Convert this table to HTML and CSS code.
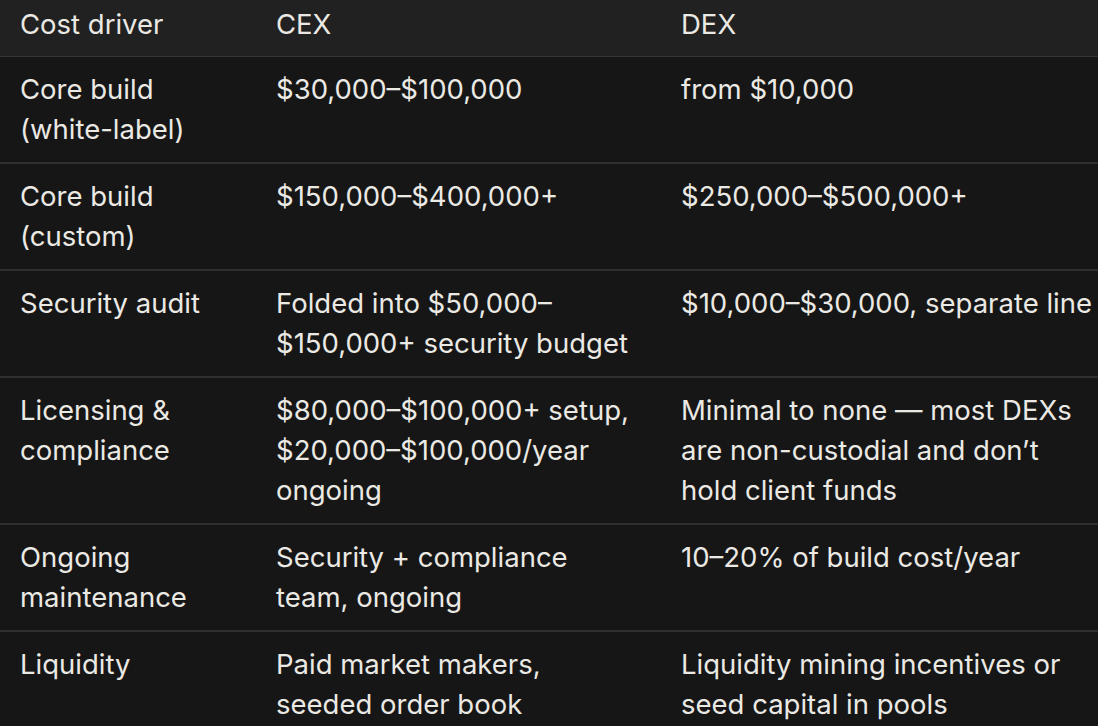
FILE: index.html
```html
<!DOCTYPE html>
<html>
<head>
<meta charset="utf-8">
<link rel="stylesheet" href="styles.css">
</head>
<body>
<div class="table">
  <div class="row head">
    <div class="cell">Cost driver</div>
    <div class="cell">CEX</div>
    <div class="cell">DEX</div>
  </div>
  <div class="row">
    <div class="cell">Core build (white-label)</div>
    <div class="cell">$30,000–$100,000</div>
    <div class="cell">from $10,000</div>
  </div>
  <div class="row">
    <div class="cell">Core build (custom)</div>
    <div class="cell">$150,000–$400,000+</div>
    <div class="cell">$250,000–$500,000+</div>
  </div>
  <div class="row">
    <div class="cell">Security audit</div>
    <div class="cell">Folded into $50,000–$150,000+ security budget</div>
    <div class="cell">$10,000–$30,000, separate line</div>
  </div>
  <div class="row">
    <div class="cell">Licensing &amp; compliance</div>
    <div class="cell">$80,000–$100,000+ setup, $20,000–$100,000/year ongoing</div>
    <div class="cell">Minimal to none — most DEXs are non-custodial and don’t hold client funds</div>
  </div>
  <div class="row">
    <div class="cell">Ongoing maintenance</div>
    <div class="cell">Security + compliance team, ongoing</div>
    <div class="cell">10–20% of build cost/year</div>
  </div>
  <div class="row last">
    <div class="cell">Liquidity</div>
    <div class="cell">Paid market makers, seeded order book</div>
    <div class="cell">Liquidity mining incentives or seed capital in pools</div>
  </div>
</div>
</body>
</html>
```

FILE: styles.css
```css
html, body {
  margin: 0;
  padding: 0;
  background: #161616;
  overflow: hidden;
}
.table {
  width: 1098px;
  font-family: Inter, "Noto Sans", sans-serif;
  font-size: 27.5px;
  line-height: 40px;
  color: #ebe9e4;
}
.row {
  display: grid;
  grid-template-columns: 256px 405px 437px;
  border-bottom: 2px solid #2f2f2f;
}
.row.head {
  background: #212121;
  border-bottom: 1px solid #363636;
}
.row.last {
  border-bottom: none;
}
.cell {
  padding: 12px 16px 13px 20px;
}
.cell:nth-child(2) {
  padding-right: 26px;
}
.cell:nth-child(3) {
  padding-right: 4px;
}
.row.head .cell {
  padding-top: 4px;
  padding-bottom: 12px;
}
```
